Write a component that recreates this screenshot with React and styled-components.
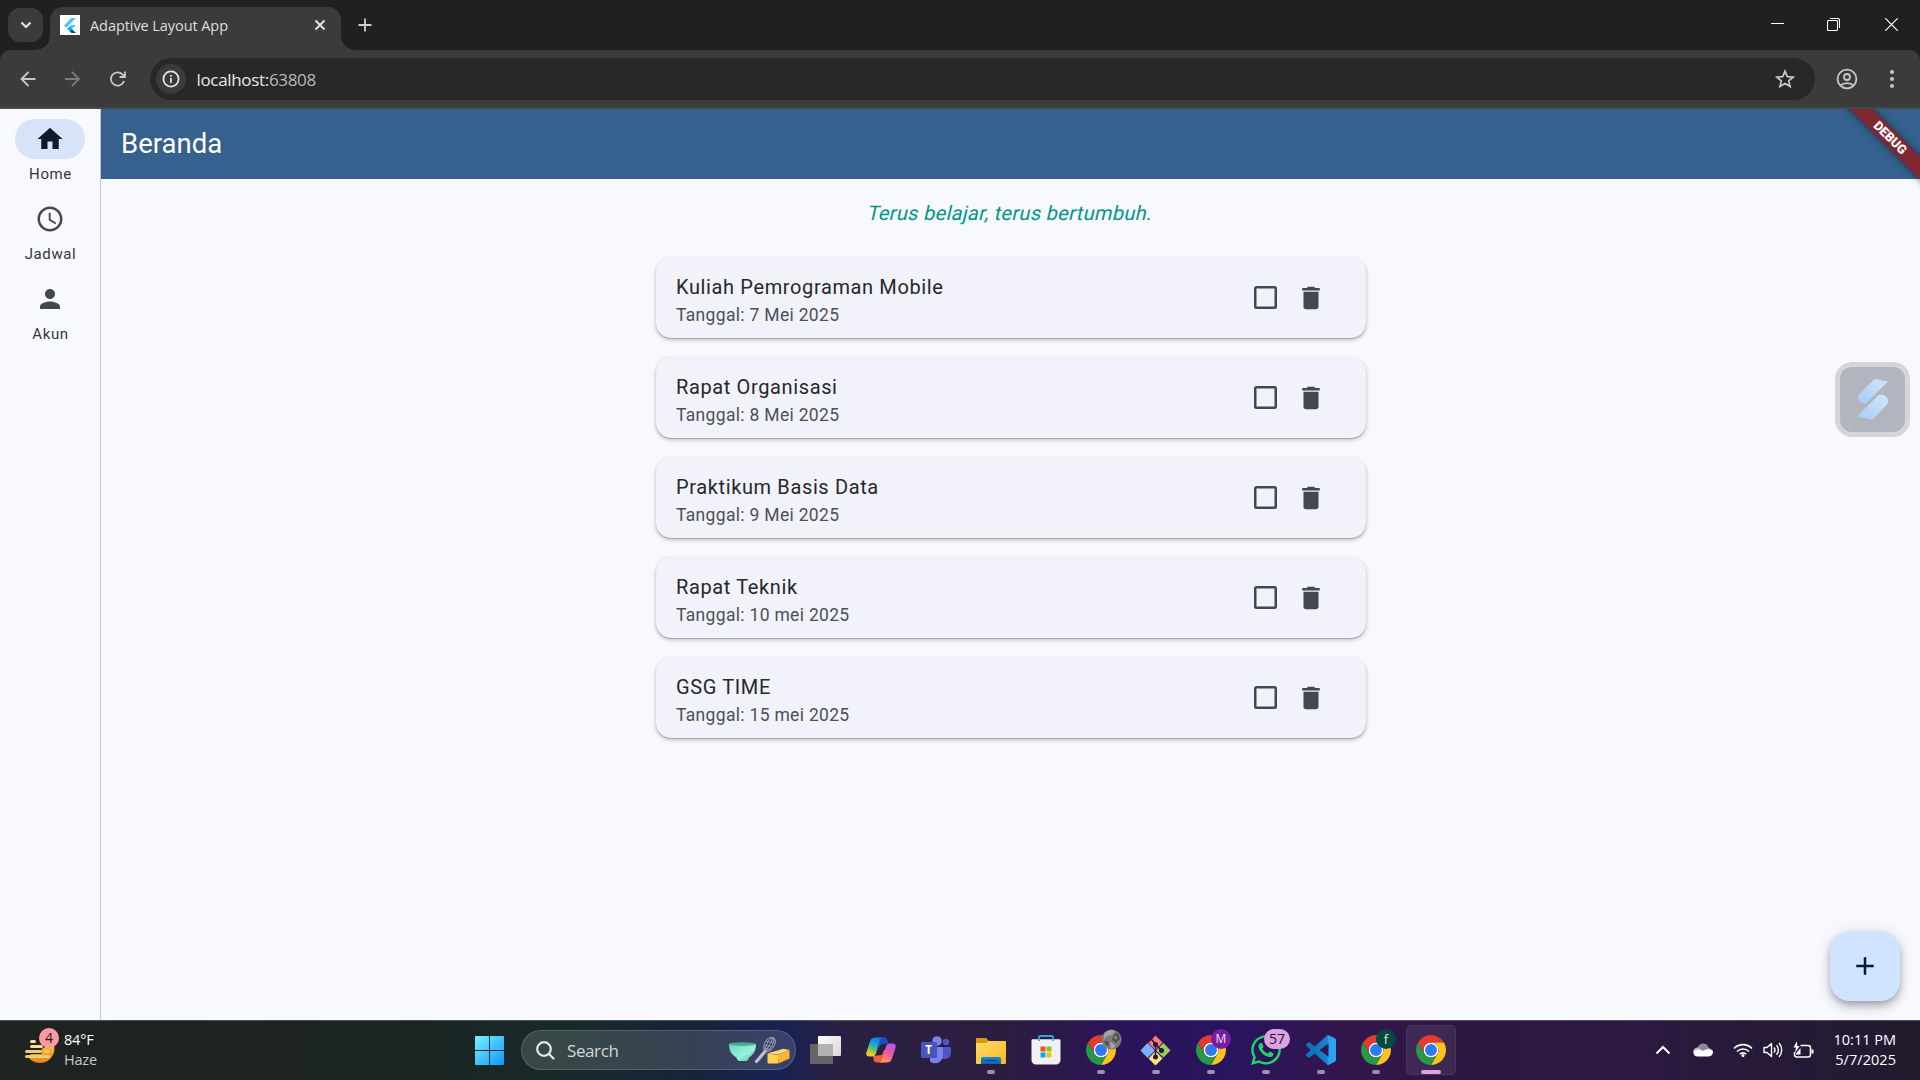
import React from "react";
import styled, { createGlobalStyle } from "styled-components";
import { FaWhatsapp } from "react-icons/fa";

const UI = `"Open Sans", "Noto Sans", sans-serif`;
const APP = `Roboto, "Noto Sans", sans-serif`;

const GlobalStyle = createGlobalStyle`
  * { box-sizing: border-box; }
  body { margin: 0; background: #f8f9ff; overflow: hidden; }
  svg { display: block; flex: none; }
`;

const Screen = styled.div`
  display: flex;
  flex-direction: column;
  width: 1920px;
  height: 1080px;
  overflow: hidden;
  font-family: ${UI};
`;

const Label = styled.span`
  white-space: pre;
  font-size: ${(p) => p.$size}px;
  line-height: ${(p) => p.$line || 20}px;
  letter-spacing: ${(p) => p.$track || 0}px;
  color: ${(p) => p.$color};
`;

/* ---------- Browser ---------- */

const TitleBar = styled.div`
  display: flex;
  height: 50px;
  flex: none;
  padding-left: 8px;
  background: #1f2120;
`;

const TabSearch = styled.div`
  display: grid;
  place-items: center;
  width: 35px;
  height: 34px;
  margin: 8px 7px 0 0;
  border-radius: 12px;
  background: #3b3b3b;
`;

const Tab = styled.div`
  position: relative;
  display: flex;
  align-items: center;
  width: 291px;
  height: 43px;
  margin-top: 7px;
  padding: 0 14px 7px 10px;
  border-radius: 13px 13px 0 0;
  background: #3b3b3b;
  &::before,
  &::after {
    content: "";
    position: absolute;
    bottom: 0;
    width: 14px;
    height: 14px;
  }
  &::before {
    left: -14px;
    background: radial-gradient(circle at 0 0, transparent 13.5px, #3b3b3b 14px);
  }
  &::after {
    right: -14px;
    background: radial-gradient(circle at 100% 0, transparent 13.5px, #3b3b3b 14px);
  }
`;

const Favicon = styled.div`
  display: grid;
  place-items: center;
  width: 20px;
  height: 20px;
  margin-right: 10px;
  background: #fff;
`;

const TabTitle = styled(Label)`
  flex: 1;
  padding-top: 1px;
`;

const NewTab = styled.div`
  margin: 18px 0 0 17px;
`;

const WindowButtons = styled.div`
  display: flex;
  margin-left: auto;
`;

const WindowButton = styled.div`
  display: grid;
  place-items: center;
  width: 57px;
  height: 49px;
  padding-right: ${(p) => p.$nudge || 0}px;
`;

const ToolbarBack = styled.div`
  flex: none;
  background: #1f2120;
`;

const Toolbar = styled.div`
  display: flex;
  align-items: center;
  height: 59px;
  padding: 1px 16px 0 16px;
  border-radius: 10px 10px 0 0;
  border-bottom: 2px solid #474747;
  background: #3b3b3b;
`;

const ToolButton = styled.div`
  display: grid;
  place-items: center;
  width: 24px;
  height: 24px;
  margin-right: ${(p) => p.$gap}px;
  margin-left: ${(p) => p.$before || 0}px;
`;

const AddressBar = styled.div`
  display: flex;
  align-items: center;
  flex: 1;
  height: 42px;
  padding: 0 20px 0 6px;
  border-radius: 21px;
  background: #282828;
`;

const SiteInfo = styled.div`
  display: grid;
  place-items: center;
  width: 30px;
  height: 30px;
  margin-right: 10.5px;
  border-radius: 50%;
  background: #3b3b3b;
`;

const Url = styled.div`
  display: flex;
  flex: 1;
  padding-top: 1px;
`;

/* ---------- App ---------- */

const Page = styled.div`
  position: relative;
  display: flex;
  flex: 1;
  min-height: 0;
  overflow: hidden;
  background: #f8f9ff;
  font-family: ${APP};
`;

const Rail = styled.nav`
  display: flex;
  flex-direction: column;
  width: 101px;
  padding-top: 10px;
  border-right: 1px solid #c3c6cf;
`;

const Destination = styled.div`
  display: flex;
  flex-direction: column;
  align-items: center;
  width: 100px;
  height: 80px;
`;

const RailLabel = styled(Label)`
  padding-left: 1px;
`;

const Indicator = styled.div`
  display: grid;
  place-items: center;
  width: 70px;
  height: 40px;
  margin-bottom: 5px;
  border-radius: 20px;
  background: ${(p) => (p.$active ? "#d7e3f8" : "transparent")};
`;

const Main = styled.main`
  display: flex;
  flex-direction: column;
  align-items: center;
  flex: 1;
`;

const AppBar = styled.header`
  display: flex;
  align-items: center;
  align-self: stretch;
  height: 70px;
  padding: 0 0 2px 20px;
  background: #36618e;
`;

const Quote = styled.p`
  margin: 20px 0 0;
  font-size: 20px;
  line-height: 28px;
  letter-spacing: ${(p) => p.$track}px;
  color: #009688;
  transform: skewX(-13deg);
`;

const List = styled.div`
  display: flex;
  flex-direction: column;
  gap: 19px;
  width: 710px;
  margin-top: 30px;
`;

const Card = styled.article`
  display: flex;
  align-items: center;
  height: 81px;
  padding: 1px 40px 0 20.5px;
  border-radius: 15px;
  background: #f1f2fa;
  box-shadow: 0 1px 1px rgba(0, 0, 0, 0.19), 0 2px 4px rgba(0, 0, 0, 0.24);
`;

const CardText = styled.div`
  display: flex;
  flex-direction: column;
  flex: 1;
  gap: 1px;
  padding-top: 3px;
`;

const Checkbox = styled.div`
  width: 23px;
  height: 23px;
  margin: 0 18.5px 1px 0;
  border: 2.5px solid #43474e;
  border-radius: 2.5px;
  box-shadow: inset 0 0 0 0.5px #43474e;
`;

const Ribbon = styled.div`
  position: absolute;
  top: 21px;
  left: 1790px;
  display: grid;
  place-items: center;
  width: 200px;
  height: 16px;
  transform: rotate(45deg);
  background: #7f2833;
  box-shadow: 0 0 7px rgba(0, 0, 0, 0.55);
  color: #fff;
  font-size: 12.75px;
  font-weight: 900;
  line-height: 16px;
`;

const Floater = styled.div`
  position: absolute;
  right: 10px;
  top: 253px;
  display: grid;
  place-items: center;
  width: 75px;
  height: 75px;
  border: 5px solid #d4d6dc;
  border-radius: 17px;
  background: #b2b4bf;
`;

const Fab = styled.div`
  position: absolute;
  right: 20px;
  bottom: 19px;
  display: grid;
  place-items: center;
  width: 70px;
  height: 70px;
  border-radius: 20px;
  background: #d1e4ff;
  box-shadow: 0 4px 6px -1px rgba(0, 0, 0, 0.2), 0 7px 12px rgba(0, 0, 0, 0.14),
    0 1px 16px rgba(0, 0, 0, 0.1);
`;

/* ---------- Taskbar ---------- */

const Taskbar = styled.footer`
  display: flex;
  height: 60px;
  flex: none;
  border-top: 1px solid rgba(255, 255, 255, 0.22);
  background: linear-gradient(
    90deg,
    #1f2322 0,
    #1b2423 420px,
    #172a2a 560px,
    #162438 690px,
    #172253 785px,
    #2a2042 835px,
    #2c1d40 1010px,
    #2a1358 1120px,
    #28145f 1230px,
    #32164f 1330px,
    #2c173f 1480px,
    #2b1940 1640px,
    #211b2d 1920px
  );
`;

const Weather = styled.div`
  position: relative;
  display: flex;
  width: 462px;
  padding: 7px 0 0 25px;
`;

const WeatherIcon = styled.div`
  width: 39px;
  padding-top: 10px;
`;

const Lines = styled.div`
  display: flex;
  flex-direction: column;
  align-items: ${(p) => p.$align || "flex-start"};
  width: ${(p) => (p.$width ? `${p.$width}px` : "auto")};
  padding-top: ${(p) => p.$top || 0}px;
`;

const Slot = styled.div`
  position: relative;
  display: flex;
  flex-direction: column;
  align-items: center;
  width: 55px;
  height: 59px;
  padding-top: ${(p) => p.$top || 14}px;
`;

const ActiveSlot = styled(Slot)`
  width: 50px;
  height: 50px;
  margin: 4px 2px 0 3px;
  padding-top: 10px;
  border-radius: 5px;
  background: rgba(255, 255, 255, 0.08);
  box-shadow: inset 0 0 0 1px rgba(255, 255, 255, 0.06);
`;

const Running = styled.div`
  width: ${(p) => (p.$active ? 20 : 8)}px;
  height: 4px;
  margin-top: ${(p) => p.$gap || 5}px;
  border-radius: 2px;
  background: ${(p) => (p.$active ? "#dca2e4" : "#9c93a9")};
`;

const Badge = styled.div`
  position: absolute;
  left: ${(p) => p.$left}px;
  top: ${(p) => p.$top}px;
  display: grid;
  place-items: center;
  width: ${(p) => p.$w || 20}px;
  height: 20px;
  border-radius: 10px;
  background: ${(p) => p.$bg};
  color: ${(p) => p.$color || "#e8e0f0"};
  font-size: ${(p) => p.$size || 12}px;
  line-height: 20px;
`;

const SearchBox = styled.div`
  display: flex;
  align-items: center;
  width: 275px;
  height: 40px;
  margin: 9px 2px 0 4px;
  padding: 0 5px 0 14px;
  border: 1px solid rgba(255, 255, 255, 0.16);
  border-radius: 20px;
  background: rgba(255, 255, 255, 0.14);
`;

const SearchText = styled(Label)`
  flex: 1;
  margin-left: 12px;
  padding-top: 1px;
`;

const SearchArt = styled.div`
  padding-top: 2px;
`;

const Tray = styled.div`
  display: flex;
  margin-left: auto;
  padding: 0 24px 0 0;
`;

const TrayIcon = styled.div`
  display: grid;
  place-items: center;
  width: ${(p) => p.$w}px;
  height: 58px;
`;

/* ---------- Drawings ---------- */

const Stroke = ({ w, h = w, d, color = "#c7c7c7", sw = 1.8, join = "miter", cap = "butt", children }) => (
  <svg width={w} height={h} viewBox={`0 0 ${w} ${h}`} fill="none" stroke={color} strokeWidth={sw} strokeLinejoin={join} strokeLinecap={cap}>
    {d && <path d={d} />}
    {children}
  </svg>
);

const Material = ({ d, color = "#43474e", size = 30 }) => (
  <svg width={size} height={size} viewBox="0 0 24 24" fill={color}>
    <path d={d} />
  </svg>
);

const FlutterLogo = () => (
  <svg width="12" height="15" viewBox="0 0 256 317">
    <path fill="#47c5fb" d="M157.7 0 0 157.7l48.8 48.8L255.3 0zM156.6 145.4 72.2 229.8l49 49.7 48.7-48.7 85.4-85.4z" />
    <path fill="#00569e" d="m121.1 279.5 37.1 37.1h97.1l-85.5-85.8z" />
    <path fill="#00b5f8" d="m71.6 230.4 48.8-48.8 49.4 49.2-48.7 48.7z" />
  </svg>
);

const ChromeLogo = () => (
  <svg width="30" height="30" viewBox="0 0 48 48">
    <circle cx="24" cy="24" r="12" fill="#fff" />
    <path fill="#e33b2e" d="M24 12h20.78a24 24 0 0 0-41.56 0L13.6 30A12 12 0 0 1 24 12z" />
    <path fill="#fcc31e" d="M34.4 30 24 48a24 24 0 0 0 20.78-36H24a12 12 0 0 1 10.4 18z" />
    <path fill="#279847" d="M13.6 30 3.22 12A24 24 0 0 0 24 48l10.4-18a12 12 0 0 1-20.8 0z" />
    <circle cx="24" cy="24" r="9.5" fill="#3079ed" />
  </svg>
);

const HazeIcon = () => (
  <svg width="32" height="38" viewBox="0 0 32 38">
    <defs>
      <linearGradient id="sun" x1="0" y1="0" x2="0" y2="1">
        <stop offset="0" stopColor="#f6c032" />
        <stop offset="1" stopColor="#f07f1d" />
      </linearGradient>
    </defs>
    <path d="M16.500 11 24 7h5A14.500 14.500 0 0 1 2.500 18l4-2h10z" fill="url(#sun)" />
    <g stroke="#ffe08a" strokeWidth="3" strokeLinecap="round">
      <path d="M6.500 3.500h3M6.500 8.500h10" />
      <path stroke="#e6cd7c" d="M1.500 13.500h14M20.500 13.500h3M1.500 18.500h22" />
    </g>
  </svg>
);

const WindowsLogo = () => (
  <svg width="29" height="29" viewBox="0 0 29 29">
    <defs>
      <linearGradient id="win" x1="0" y1="0" x2="1" y2="1">
        <stop offset="0" stopColor="#7bf0ff" />
        <stop offset="1" stopColor="#0a98ff" />
      </linearGradient>
    </defs>
    <path fill="url(#win)" d="M1 0h13v14H0V1a1 1 0 0 1 1-1zM15 0h13a1 1 0 0 1 1 1v13H15zM0 15h14v14H1a1 1 0 0 1-1-1zM15 15h14v13a1 1 0 0 1-1 1H15z" />
  </svg>
);

const BakingArt = () => (
  <svg width="62" height="30" viewBox="0 0 62 30">
    <defs>
      <linearGradient id="bowl" x1="0" y1="0" x2="1" y2="1">
        <stop offset="0" stopColor="#66d9c0" />
        <stop offset=".6" stopColor="#9af0dc" />
        <stop offset="1" stopColor="#4cb9a0" />
      </linearGradient>
    </defs>
    <path fill="url(#bowl)" d="M1 8h27c0 7-3 11-7 13.500-.5 2-1.500 3.500-3 3.500h-6.500c-1.500 0-2.500-1.500-3-3.500C4 19 1 15 1 8z" />
    <ellipse cx="14.500" cy="8" rx="13.500" ry="1.800" fill="#47a995" />
    <path d="M28.500 25.500 37 15.500" stroke="#c9bdd2" strokeWidth="3.200" strokeLinecap="round" />
    <g fill="none" stroke="#b1adc4" strokeWidth=".9">
      <path d="M36.500 15.500C34 8 39 1 44 1.500s5 8-2.500 13.500zM37 15.500C38 8 41 2 45 2M39 15.500C44 12 46 6 46 2.500M37.500 15.500 45.500 2" />
      <path d="M36 9l10 2M38 5l9 2M36 12l8 2" opacity=".6" />
    </g>
    <path fill="#ffd978" d="m39 17.500 16.500-4.800 6 1.300L50 18.500z" />
    <path fill="#ffd24f" d="M39.500 17.500 50 19v8.500h-9.500a1 1 0 0 1-1-1z" />
    <path fill="#f7b531" d="m49.500 18.700 12-4.700v8.500l-11 5z" />
  </svg>
);

const TaskViewIcon = () => (
  <svg width="31" height="30" viewBox="0 0 31 30">
    <defs>
      <linearGradient id="tv" x1="0" y1="0" x2="1" y2="1">
        <stop offset="0" stopColor="#fff" />
        <stop offset="1" stopColor="#d8d6d8" />
      </linearGradient>
    </defs>
    <rect x="0" y="9" width="23" height="20" rx="1" fill="#666567" />
    <rect x="8" y="1" width="23" height="20" rx="1" fill="url(#tv)" />
    <path d="M8 9h15v12H8z" fill="#b3b2b3" />
  </svg>
);

const CopilotIcon = () => (
  <svg width="30" height="28" viewBox="0 0 30 28">
    <defs>
      <linearGradient id="cpa" x1=".6" y1="0" x2=".2" y2="1">
        <stop offset="0" stopColor="#1b78dd" />
        <stop offset=".35" stopColor="#18a6d6" />
        <stop offset=".6" stopColor="#5fc26d" />
        <stop offset=".85" stopColor="#ecc72a" />
      </linearGradient>
      <linearGradient id="cpb" x1=".8" y1="0" x2=".3" y2="1">
        <stop offset="0" stopColor="#a65cf0" />
        <stop offset=".5" stopColor="#ec57a0" />
        <stop offset="1" stopColor="#ff9a55" />
      </linearGradient>
    </defs>
    <path fill="#1a4fc0" d="M9 1.500h9c2 0 3 1 3.500 3l1 3.500h-5c-2 0-3 1-4 4z" />
    <path fill="#f0603c" d="m7 20 9-1 2-5 4 0-3 9c-1 3-2 3.500-4 3.500h-4c-2 0-3-1-3.500-3.500z" />
    <path fill="url(#cpa)" d="M9.500 1.500h7c-2 .8-2.500 2-3 4l-3.300 11.500c-.8 2.500-2 3.500-4.200 3.500H3c-2.500 0-3.300-2-2.500-4.500L4 5.500c1-3 2.500-4 5.500-4z" />
    <path fill="url(#cpb)" d="M20.500 26.500h-7c2-.8 2.500-2 3-4L19.800 11c.8-2.500 2-3.500 4.200-3.500h3c2.500 0 3.300 2 2.500 4.500L26 22.500c-1 3-2.500 4-5.500 4z" />
  </svg>
);

const TeamsMark = styled.div`
  position: absolute;
  left: 13px;
  top: 20px;
  width: 15px;
  height: 17px;
  text-align: center;
  font-weight: 700;
  font-size: 11.5px;
  line-height: 17px;
  color: #fff;
`;

const TeamsIcon = () => (
  <svg width="30" height="28" viewBox="0 0 30 28">
    <circle cx="25" cy="6" r="3.200" fill="#4e57c4" />
    <path fill="#4e57c4" d="M20 11h8.500c1 0 1.500.5 1.500 1.500V17a6 6 0 0 1-10 4.500z" />
    <circle cx="16" cy="5" r="4.800" fill="#7b83eb" />
    <path fill="#7b83eb" d="M9 11h11.500c.9 0 1.500.6 1.500 1.500V19a8 8 0 0 1-13 6.500z" />
    <rect x="0" y="6" width="16" height="16" rx="1.500" fill="#4b53bc" />
  </svg>
);

const FolderIcon = () => (
  <svg width="30" height="28" viewBox="0 0 30 28">
    <defs>
      <linearGradient id="fold" x1="0" y1="0" x2="1" y2="1">
        <stop offset="0" stopColor="#ffdb6b" />
        <stop offset="1" stopColor="#f8b91c" />
      </linearGradient>
      <linearGradient id="foldb" x1="0" y1="0" x2="0" y2="1">
        <stop offset="0" stopColor="#1489d8" />
        <stop offset="1" stopColor="#0c63b0" />
      </linearGradient>
    </defs>
    <path fill="#dc9a0b" d="M1 1h9l3 3v5H0V2a1 1 0 0 1 1-1z" />
    <path fill="url(#fold)" d="M0 6h10l3-2h16a1 1 0 0 1 1 1v21a1 1 0 0 1-1 1H1a1 1 0 0 1-1-1z" />
    <path fill="url(#foldb)" d="M5 27v-5a2 2 0 0 1 2-2h16a2 2 0 0 1 2 2v5z" />
    <path stroke="#083f78" strokeWidth="1" d="M9 23.500h12" />
  </svg>
);

const StoreIcon = () => (
  <svg width="30" height="30" viewBox="0 0 30 30">
    <path d="M8 6V2.200C8 1.500 8.500 1 9.200 1h11.600c.7 0 1.200.5 1.200 1.200V6" fill="none" stroke="#2aa8ea" strokeWidth="1.800" />
    <path fill="#f1f1f1" d="M.5 5.500c0-.8.500-1.200 1.200-1.200h26.600c.7 0 1.200.4 1.200 1.200V25a4.500 4.500 0 0 1-4.500 4.500H5A4.500 4.500 0 0 1 .5 25z" />
    <path fill="#2aa8ea" d="M7.200 4.300H9V6H7.200zM21 4.300h1.800V6H21z" />
    <path fill="#f1511b" d="M9.500 11.500h5v5h-5z" />
    <path fill="#80cc28" d="M15.500 11.500h5v5h-5z" />
    <path fill="#00adef" d="M9.500 17.500h5v5h-5z" />
    <path fill="#fbbc09" d="M15.500 17.500h5v5h-5z" />
  </svg>
);

const GitIcon = () => (
  <svg width="31" height="31" viewBox="0 0 31 31">
    <path fill="#f8787c" d="m15.500.5 7 7-7 8-7-7.500z" />
    <path fill="#8fd05e" d="m23.500 8 7 7.500-7 7-7.500-7z" />
    <path fill="#ffe17c" d="m15.500 16 7 7.500-7 7-7-7z" />
    <path fill="#7fb0ff" d="m7.500 8 7.500 7.500-7.500 7.500L.5 15.500z" />
    <g stroke="#2a1740" strokeWidth="1.600" fill="#2a1740">
      <path fill="none" d="M11.500 4.500l4 4.500v13M15.500 9l6 6.500" />
      <circle cx="15.500" cy="9.500" r="1.700" />
      <circle cx="15.500" cy="22" r="1.700" />
      <circle cx="21.500" cy="15.500" r="1.700" />
    </g>
  </svg>
);

const CodeIcon = () => (
  <svg width="30" height="30" viewBox="0 0 24 24">
    <defs>
      <linearGradient id="code" x1="0" x2="1">
        <stop offset="0" stopColor="#0a70b8" />
        <stop offset=".7" stopColor="#1483cc" />
        <stop offset=".76" stopColor="#2aa4f0" />
      </linearGradient>
    </defs>
    <path fill="url(#code)" d="M23.150 2.587 18.210.21a1.494 1.494 0 0 0-1.705.29l-9.460 8.630-4.120-3.128a.999.999 0 0 0-1.276.057L.327 7.261A1 1 0 0 0 .326 8.740L3.899 12 .326 15.260a1 1 0 0 0 .001 1.479L1.650 17.940a.999.999 0 0 0 1.276.057l4.120-3.128 9.460 8.630a1.492 1.492 0 0 0 1.704.290l4.942-2.377A1.500 1.500 0 0 0 24 20.060V3.939a1.500 1.500 0 0 0-.850-1.352zm-5.146 14.861L10.826 12l7.178-5.448z" />
  </svg>
);

const MoonPhoto = styled.svg`
  position: absolute;
  left: 28px;
  top: 8px;
`;

const WhatsAppMark = styled(FaWhatsapp)`
  margin: -2px 0;
  color: #25d366;
`;

const WindsurfLogo = () => (
  <svg width="32" height="42" viewBox="0 0 32 42">
    <defs>
      <linearGradient id="surf" x1="0" y1="1" x2="1" y2="0">
        <stop offset="0" stopColor="#a8cbf5" />
        <stop offset="1" stopColor="#d3e5fb" />
      </linearGradient>
    </defs>
    <path fill="url(#surf)" d="M17.500 0 31 2.500 9.500 24C5 25.500 1 22.500 1 18.500c0-1.500.5-2.500 1.500-3.500z" />
    <path fill="url(#surf)" d="M21.500 16c5-1 9.500 1.500 9.500 6 0 1.800-.7 3.200-2 4.500L15.500 41 0 37.500z" />
  </svg>
);

const HOME = "M10 20v-6h4v6h5v-8h3L12 3 2 12h3v8z";
const CLOCK =
  "M11.990 2C6.470 2 2 6.480 2 12s4.470 10 9.990 10C17.520 22 22 17.520 22 12S17.520 2 11.990 2zM12 20c-4.420 0-8-3.580-8-8s3.580-8 8-8 8 3.580 8 8-3.580 8-8 8zm.5-13H11v6l5.250 3.150.750-1.230-4.500-2.670z";
const PERSON =
  "M12 12c2.210 0 4-1.790 4-4s-1.790-4-4-4-4 1.790-4 4 1.790 4 4 4zm0 2c-2.670 0-8 1.340-8 4v2h16v-2c0-2.660-5.330-4-8-4z";
const TRASH = "M6 19c0 1.100.9 2 2 2h8c1.100 0 2-.9 2-2V7H6v12zM19 4h-3.500l-1-1h-5l-1 1H5v2h14V4z";
const PLUS = "M19 13h-6v6h-2v-6H5v-2h6V5h2v6h6v2z";

const destinations = [
  { label: "Home", icon: HOME, active: true },
  { label: "Jadwal", icon: CLOCK },
  { label: "Akun", icon: PERSON },
];

const tasks = [
  { title: "Kuliah Pemrograman Mobile", date: "7 Mei 2025" },
  { title: "Rapat Organisasi", date: "8 Mei 2025" },
  { title: "Praktikum Basis Data", date: "9 Mei 2025" },
  { title: "Rapat Teknik", date: "10 mei 2025" },
  { title: "GSG TIME", date: "15 mei 2025" },
];

function Browser() {
  return (
    <>
      <TitleBar>
        <TabSearch>
          <Stroke w={12} h={8} d="M1.500 1.500 6 6l4.500-4.500" color="#e3e3e3" sw={2.2} />
        </TabSearch>
        <Tab>
          <Favicon><FlutterLogo /></Favicon>
          <TabTitle $size={14.5} $track={-0.07} $color="#dedede">Adaptive Layout App</TabTitle>
          <Stroke w={14} d="M2.500 2.500l9 9M11.500 2.500l-9 9" color="#e3e3e3" sw={2} />
        </Tab>
        <NewTab>
          <Stroke w={14} d="M7 .5v13M.5 7h13" color="#cfcfcf" />
        </NewTab>
        <WindowButtons>
          <WindowButton>
            <Stroke w={13} d="M0 5.500h13" color="#fff" sw={1} />
          </WindowButton>
          <WindowButton $nudge={2}>
            <Stroke w={13} color="#fff" sw={1.1}>
              <rect x=".5" y="2.500" width="10" height="10" rx="1" />
              <path d="M3 .5h7.500a2 2 0 0 1 2 2V10" />
            </Stroke>
          </WindowButton>
          <WindowButton>
            <Stroke w={13} d="M.3.3l12.400 12.400M12.700.3L.3 12.700" color="#fff" sw={1.2} />
          </WindowButton>
        </WindowButtons>
      </TitleBar>
      <ToolbarBack>
        <Toolbar>
          <ToolButton $gap={20}>
            <Stroke w={16} d="M15.500 8H2M8.500 1 1.500 8l7 7" />
          </ToolButton>
          <ToolButton $gap={22}>
            <Stroke w={16} d="M1 8h13.500M8 1l7 7-7 7" color="#7c7c7c" />
          </ToolButton>
          <ToolButton $gap={20}>
            <Stroke w={16} d="M14 10A6.700 6.700 0 1 1 13 4l1.500 1.500M15 .5V6H9.500" />
          </ToolButton>
          <AddressBar>
            <SiteInfo>
              <Stroke w={18} color="#e3e3e3" sw={1.8}>
                <circle cx="9" cy="9" r="7.600" />
                <path d="M9 8v5M9 5v1.800" />
              </Stroke>
            </SiteInfo>
            <Url>
              <Label $size={17} $track={-0.33} $color="#e8e8e8">localhost:</Label>
              <Label $size={17} $track={-0.33} $color="#b9b9b9">63808</Label>
            </Url>
            <Stroke w={20} d="M10 2.200l2.300 5.400 5.900.5-4.500 3.800 1.400 5.700L10 14.600l-5.100 3 1.400-5.700L1.800 8.100l5.900-.5z" sw={1.7} />
          </AddressBar>
          <ToolButton $gap={21} $before={20}>
            <Stroke w={22} sw={1.8}>
              <circle cx="11" cy="11" r="9.400" />
              <circle cx="11" cy="9" r="3" />
              <path d="M4.500 17.500c3.500-3.200 9.500-3.200 13 0" />
            </Stroke>
          </ToolButton>
          <ToolButton $gap={0}>
            <svg width="4" height="20" fill="#c7c7c7">
              <circle cx="2" cy="3" r="2" />
              <circle cx="2" cy="10" r="2" />
              <circle cx="2" cy="17" r="2" />
            </svg>
          </ToolButton>
        </Toolbar>
      </ToolbarBack>
    </>
  );
}

function FlutterApp() {
  return (
    <Page>
      <Rail>
        {destinations.map((d) => (
          <Destination key={d.label}>
            <Indicator $active={d.active}>
              <Material d={d.icon} color={d.active ? "#101c2b" : "#43474e"} />
            </Indicator>
            <RailLabel $size={15} $track={0.625} $color="#33363a">{d.label}</RailLabel>
          </Destination>
        ))}
      </Rail>
      <Main>
        <AppBar>
          <Label $size={27.5} $line={35} $color="#fff">Beranda</Label>
        </AppBar>
        <Quote $track={0.3125}>Terus belajar, terus bertumbuh.</Quote>
        <List>
          {tasks.map((t) => (
            <Card key={t.title}>
              <CardText>
                <Label $size={20} $line={30} $track={0.625} $color="#25282c">{t.title}</Label>
                <Label $size={17.5} $line={25} $track={0.3125} $color="#4c5057">Tanggal: {t.date}</Label>
              </CardText>
              <Checkbox />
              <Material d={TRASH} />
            </Card>
          ))}
        </List>
      </Main>
      <Ribbon>DEBUG</Ribbon>
      <Floater><WindsurfLogo /></Floater>
      <Fab><Material d={PLUS} color="#001d36" /></Fab>
    </Page>
  );
}

function TaskbarArea() {
  return (
    <Taskbar>
      <Weather>
        <WeatherIcon><HazeIcon /></WeatherIcon>
        <Lines $top={2}>
          <Label $size={14.5} $track={-0.2} $color="#fff">84°F</Label>
          <Label $size={14.5} $track={-0.2} $color="#c4c8c8">Haze</Label>
        </Lines>
        <Badge $left={39} $top={7} $bg="#ff99a4" $color="#1a1a1a" $size={14}>4</Badge>
      </Weather>
      <Slot $top={15}><WindowsLogo /></Slot>
      <SearchBox>
        <Stroke w={19} color="#e6eaea" sw={2.2} cap="round">
          <circle cx="8" cy="8" r="6.800" />
          <path d="M13 13l4.500 4.500" />
        </Stroke>
        <SearchText $size={17} $track={-0.4} $color="#d3d7d8">Search</SearchText>
        <SearchArt><BakingArt /></SearchArt>
      </SearchBox>
      <Slot><TaskViewIcon /></Slot>
      <Slot $top={15}><CopilotIcon /></Slot>
      <Slot $top={15}><TeamsIcon /><TeamsMark>T</TeamsMark></Slot>
      <Slot $top={16}><FolderIcon /><Running /></Slot>
      <Slot><StoreIcon /></Slot>
      <Slot>
        <ChromeLogo /><Running />
        <MoonPhoto width="21" height="21" viewBox="0 0 21 21">
          <circle cx="10.500" cy="10.500" r="10" fill="#7d7d7d" />
          <path fill="#a2a2a2" d="M3 5c3-4 8-5 11-3l-3 4-5 1-3 4z" />
          <path fill="#505050" d="M13 5l4-1 2 6-4 4-4-3zM3 12l4 0 1 5-3-1z" />
          <path fill="#a8a8a8" d="M9 13l4 2 1 3-4 2zM13 7l3 1-1 3z" />
        </MoonPhoto>
      </Slot>
      <Slot><GitIcon /><Running $gap={4} /></Slot>
      <Slot>
        <ChromeLogo /><Running />
        <Badge $left={28} $top={8} $bg="#771da0">M</Badge>
      </Slot>
      <Slot>
        <WhatsAppMark size={34} /><Running />
        <Badge $left={26} $top={8} $w={26} $bg="#dca2e4" $color="#1a1a1a" $size={14}>57</Badge>
      </Slot>
      <Slot><CodeIcon /><Running /></Slot>
      <Slot>
        <ChromeLogo /><Running />
        <Badge $left={28} $top={8} $bg="#04493f" $size={13}>f</Badge>
      </Slot>
      <ActiveSlot><ChromeLogo /><Running $active /></ActiveSlot>
      <Tray>
        <TrayIcon $w={40}>
          <Stroke w={16} h={10} d="M1.500 8.500 8 2l6.500 6.500" color="#fff" sw={2} />
        </TrayIcon>
        <TrayIcon $w={40}>
          <svg width="20" height="14" viewBox="0 0 20 14">
            <path fill="#b9b5bf" d="M5 4.500a5.500 5.500 0 0 1 10.500.5C18.500 5.500 20 7.500 20 9.500H0C0 6.500 2 4.500 5 4.500z" />
            <path fill="#8d8896" d="M5 4.500a5.500 5.500 0 0 1 10.500.5L10 8z" />
            <path fill="#fff" d="M1 8.500C4 5.500 7 6 10 8c3-2 7-2 9.800 0 .6 3-1.300 5.500-4 5.500H4.500C1.500 13.500-.3 11 1 8.500z" />
          </svg>
        </TrayIcon>
        <TrayIcon $w={40}>
          <Stroke w={20} h={16} color="#fff" sw={1.6}>
            <path d="M1 6.500a12.500 12.500 0 0 1 18 0M4 9.500a8.500 8.500 0 0 1 12 0M6.800 12.200a4.500 4.500 0 0 1 6.400 0" />
            <circle cx="10" cy="13.600" r="1.500" fill="#fff" stroke="none" />
          </Stroke>
        </TrayIcon>
        <TrayIcon $w={20}>
          <Stroke w={21} h={18} color="#fff" sw={1.4} join="round">
            <path d="M1 6.500h3l4.500-4v13l-4.500-4H1z" />
            <path d="M11 6.500a4 4 0 0 1 0 5M13.500 4.200a7 7 0 0 1 0 9.600M16 2a10.500 10.500 0 0 1 0 14" />
          </Stroke>
        </TrayIcon>
        <TrayIcon $w={40}>
          <Stroke w={21} h={19} color="#fff" sw={1.5}>
            <path d="M7.500 4.500H15A2.500 2.500 0 0 1 17.500 7v6.500A2.500 2.500 0 0 1 15 16H4a2.500 2.500 0 0 1-2.500-2.500V11" />
            <path d="M18.500 8.500h2v4h-2z" fill="#fff" stroke="none" />
            <path d="M4 0 .5 6.500H3L2 12l4.500-7H4.200z" fill="#fff" stroke="none" />
            <path d="M3 12.500 7.500 7v6.500H3z" fill="#fff" stroke="none" />
          </Stroke>
        </TrayIcon>
        <Lines $align="flex-end" $top={9} $width={73}>
          <Label $size={14.5} $track={0} $color="#fff">10:11 PM</Label>
          <Label $size={14.5} $track={0.05} $color="#fff">5/7/2025</Label>
        </Lines>
      </Tray>
    </Taskbar>
  );
}

export default function App() {
  return (
    <>
      <GlobalStyle />
      <Screen>
        <Browser />
        <FlutterApp />
        <TaskbarArea />
      </Screen>
    </>
  );
}
